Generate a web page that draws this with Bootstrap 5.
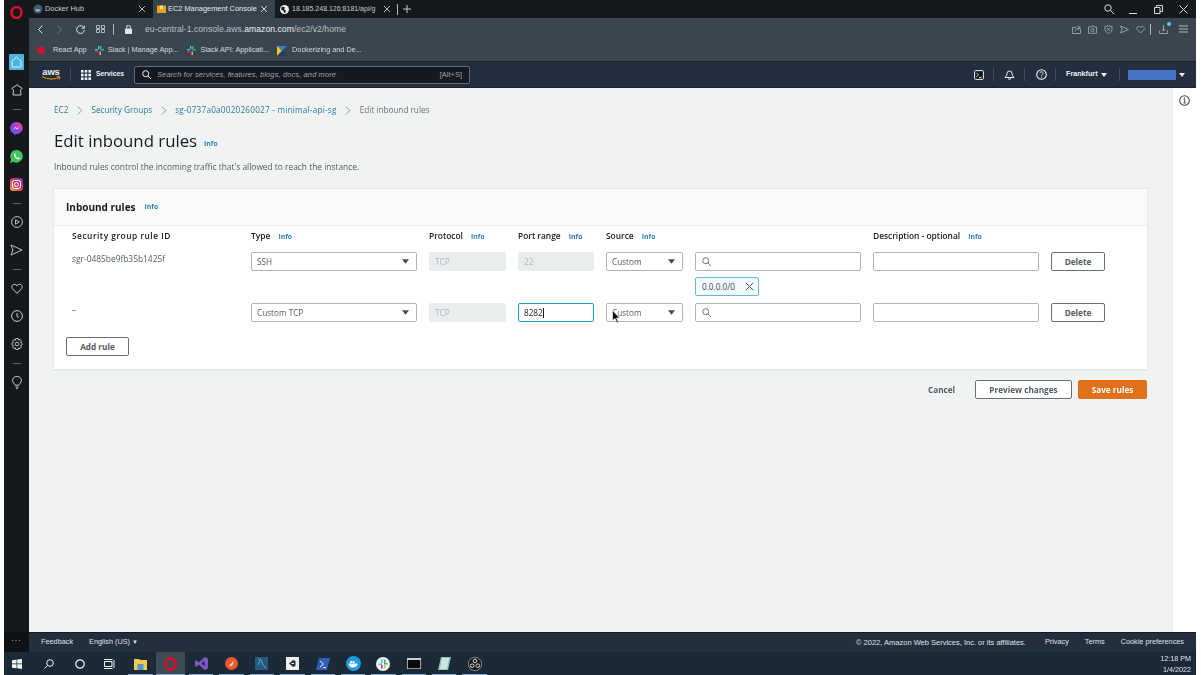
<!DOCTYPE html>
<html lang="en">
<head>
<meta charset="utf-8">
<title>Edit inbound rules</title>
<link href="https://cdn.jsdelivr.net/npm/bootstrap@5.3.0/dist/css/bootstrap.min.css" rel="stylesheet">
<style>
html,body{height:675px;overflow:hidden;background:#fff}
body{font-family:"Liberation Sans",Arial,sans-serif;font-size:8.75px;line-height:1.2;color:#16191f}
.shell{width:1192px;height:675px;margin-left:4px;position:relative;filter:blur(.35px)}
svg{display:block;flex:none}
.tabstrip{height:18px;background:#16191c;color:#c3c9ce;font-size:7.4px}
.logo-slot{width:29px;position:relative;z-index:1;margin-top:7px}
.tabx{width:122px;height:18px;padding:0 7px 0 0}
.tabx.first{width:120px}
.tabx.on{background:#38434d;color:#e6e9eb}
.tabx span{white-space:nowrap}
.tab-gap{gap:2px}
.winctl{margin-left:auto;padding-right:0}
.winctl>div{width:25px;display:flex;justify-content:center}
.midrow{height:634px}
.rail{width:25px;background:#16191c;padding-top:30px}
.rail-i{height:28px}
.rail-d{height:10px}
.rail-d::before{content:"";display:block;width:8px;height:1px;background:#5d656b}
.rail-end{height:20px;margin-top:auto;background:#0f1214;color:#aeb4b8;font-size:9px;letter-spacing:1px;width:100%;line-height:12px}
.mainc{min-width:0}
.addr{height:22px;background:#3a4550;color:#b9c0c6;font-size:8.6px;padding:0 6px 0 9px}
.addr b{font-weight:400;color:#eef0f2}
.addr .vsep{width:1px;height:11px;background:#aeb5ba}
.marks{height:22px;background:#3a4550;color:#d6dade;font-size:7.3px;padding:0 0 0 8px;border-bottom:1px solid #1d2329}
.awsnav{height:26px;background:#232f3e;color:#eef0f2;font-size:7.5px;border-bottom:1px solid #1a232e}
.navsep{width:1px;height:13px;background:#414d5c}
.sbox{width:336px;height:18px;background:#16191f;border:1px solid #5f6b7a;border-radius:2px;color:#98a2ad;font-size:7.5px;padding:0 7px 0 7px;font-style:italic}
.sbox em{font-style:normal;margin-left:auto}
.userbar{width:48px;height:10px;background:#4472c4}
.work{height:544px;background:#f1f3f3;font-family:"Open Sans",sans-serif}
.pagec{padding:0 25px;min-width:0}
.crumbs{height:44px;margin:0;padding:0;font-size:8.2px;flex-wrap:nowrap;color:#687078;white-space:nowrap}
.crumbs a{color:#2a7aa5;text-decoration:none}
.crumbs .cs{margin:0 8.500px}
.crumbs .sgname{letter-spacing:.22px}
.ttl{font-size:16.800px;line-height:18px;font-weight:400;color:#16191f;margin:0;font-family:"Open Sans",sans-serif}
.infol{font-size:6.800px;font-weight:700;color:#2a7fb0;text-decoration:none}
.lede{margin:12px 0 0;color:#545b64;font-size:8.4px;line-height:10px;height:10px}
.rules-card{margin-top:17px;height:180px;border:0;border-radius:0;box-shadow:0 0 0 1px #e4e8e8,0 1px 1px 0 #a9b3b4;background:#fff;overflow:visible}
.rules-head{height:37px;background:#fafafa;border-bottom:1px solid #eaeded;padding:0 12px;border-radius:0}
.rules-head h2{font-size:10px;font-weight:700;margin:0;color:#16191f;font-family:"Open Sans",sans-serif}
.rules-body{padding:5px 12px 0 18px}
.rgrid{display:grid;grid-template-columns:167px 166px 77px 76px 77px 166px 166px 54px;column-gap:12px}
.rh{height:10px;line-height:10px;font-weight:600;font-size:8.4px;color:#16191f;margin-bottom:11px;white-space:nowrap}
.rh .infol{margin-left:6px}
.rh.widetxt{letter-spacing:.5px}
.ctl.form-control,.ctl.form-select{height:19px;min-height:19px;padding:0 5px;font-size:8.2px;line-height:17px;border:1px solid #aab7b8;border-radius:2px;color:#545b64;box-shadow:none;font-family:"Open Sans",sans-serif}
.ctl.form-select{background-size:7px 5px;background-position:right 7px center;padding-right:18px;background-image:url("data:image/svg+xml,%3Csvg xmlns='http://www.w3.org/2000/svg' viewBox='0 0 9 6'%3E%3Cpath d='M0 0h9L4.500 6z' fill='%23444b52'/%3E%3C/svg%3E")}
.ctl.form-control:disabled{background:#eaeded;border-color:#eaeded;color:#aab7b8;opacity:1}
.ctl.focused{border:1.5px solid #12a0c4;color:#16191f;display:flex;align-items:center}
.caret-bar{display:inline-block;width:1px;height:10px;background:#16191f}
.ridtxt{color:#545b64;font-size:8.4px;line-height:10px;margin-top:2px}
.sinput{height:19px;border:1px solid #aab7b8;border-radius:2px;background:#fff;padding:0 6px}
.btn.delbtn{height:19px;padding:0;font-size:8.2px;font-weight:700;line-height:17px;border:1px solid #687078;border-radius:2px;color:#545b64;background:#fff;font-family:"Open Sans",sans-serif}
.chipcell{height:19px;margin:6px 0 7px}
.chip{width:64px;height:19px;background:#f1faff;border:1px solid #66bcd2;border-radius:2px;padding:0 4px 0 6px;color:#444b52;font-size:8.2px}
.btn.addbtn{width:63px;height:19px;padding:0;margin:15px 0 0 -6px;font-size:8.2px;font-weight:700;line-height:17px;border:1px solid #687078;border-radius:2px;color:#545b64;background:#fff;font-family:"Open Sans",sans-serif}
.actions{margin-top:11px;gap:0}
.btn.linkbtn,.btn.prev,.btn.savebtn{height:19px;padding:0;font-size:8.2px;font-weight:700;line-height:17px;border-radius:2px;font-family:"Open Sans",sans-serif}
.btn.linkbtn{color:#545b64;border:0;width:27px;margin-right:20px;white-space:nowrap}
.btn.prev{width:97px;border:1px solid #687078;color:#545b64;background:#fff;margin-right:6px}
.btn.savebtn{width:69px;background:#e0701a;border:1px solid #e0701a;color:#fff}
.sidepanel{width:24px;background:#fff;padding-top:7px;border-left:1px solid #eaeded}
.foot{height:20px;background:#232f3e;color:#dfe3e6;font-size:7.3px;padding:0 12px 0 12px;border-top:1px solid #151c25}
.foot .tri{font-size:6px}
.taskb{height:23px;background:#1c2a38;color:#e6eaed}
.slot{width:30.4px;height:23px;flex:none}
.slot.run{box-shadow:inset 0 -1px 0 #7fb3d6;width:24.4px;margin:0 3px}
.slot.cur{background:#3f4b54;box-shadow:inset 0 -1px 0 #7fb3d6;width:29px;margin:0 .7px}
.clock{margin-left:auto;text-align:right;font-size:7.2px;line-height:11px;padding-right:5px;color:#e4e8ec}
.mpointer{position:absolute;left:608px;top:310px}
.blue-dot{position:absolute;right:-3px;top:-3px;width:4px;height:4px;border-radius:50%;background:#63c2ef}
</style>
</head>
<body>
<div class="shell d-flex flex-column">

  <!-- tab strip -->
  <div class="tabstrip d-flex align-items-center">
    <div class="logo-slot d-flex justify-content-center" style="padding-right:5px">
      <svg width="13" height="13" viewBox="0 0 13 13"><ellipse cx="6.500" cy="6.500" rx="5" ry="5.500" fill="none" stroke="#d70f2b" stroke-width="2.600"/></svg>
    </div>
    <div class="tabx first tab-gap d-flex align-items-center">
      <svg width="10" height="10" viewBox="0 0 10 10"><circle cx="5" cy="5" r="4.500" fill="#3b5a78"/><path d="M2 5.500h5.500q-1 2-3 2T2 5.500z" fill="#9cc"/></svg>
      <span>Docker Hub</span>
      <svg class="ms-auto" width="8" height="8" viewBox="0 0 8 8"><path d="M1 1l6 6M7 1L1 7" stroke="#aeb5ba"/></svg>
    </div>
    <div class="tabx on tab-gap d-flex align-items-center" style="padding-left:4px">
      <svg width="9" height="10" viewBox="0 0 9 10"><path d="M0 1.500h9V9H0z" fill="#e8a317"/><path d="M3 1.500h3V5H3z" fill="#f7d98a"/></svg>
      <span>EC2 Management Console</span>
      <svg class="ms-auto" width="8" height="8" viewBox="0 0 8 8"><path d="M1 1l6 6M7 1L1 7" stroke="#d5d9dc"/></svg>
    </div>
    <div class="tabx d-flex align-items-center" style="padding-left:5px;width:116px;padding-right:0;gap:3px">
      <svg width="9" height="9" viewBox="0 0 9 9"><circle cx="4.500" cy="4.500" r="4.500" fill="#eef0f2"/><path d="M2 1.500l3 1-1 2 2 1-1 3-2-3-2-1z" fill="#16191c"/></svg>
      <span style="font-size:7px">18.185.248.126:8181/api/g</span>
      <svg class="ms-auto" width="8" height="8" viewBox="0 0 8 8"><path d="M1 1l6 6M7 1L1 7" stroke="#aeb5ba"/></svg>
    </div>
    <div style="width:1px;height:11px;background:#aeb5ba;margin-left:6px"></div>
    <svg style="margin-left:5px" width="8" height="8" viewBox="0 0 8 8"><path d="M4 0v8M0 4h8" stroke="#c3c9ce"/></svg>
    <div class="winctl d-flex align-items-center">
      <div><svg width="10" height="10" viewBox="0 0 10 10"><circle cx="4" cy="4" r="3.200" fill="none" stroke="#d5d9dc"/><path d="M6.500 6.500L10 10" stroke="#d5d9dc"/></svg></div>
      <div><svg width="9" height="9" viewBox="0 0 9 9"><path d="M0 8.500h8" stroke="#d5d9dc"/></svg></div>
      <div><svg width="9" height="9" viewBox="0 0 9 9"><path d="M.5 2.500h5.500v6H.5zM2.500 2.500V.5h6v6H6" fill="none" stroke="#d5d9dc"/></svg></div>
      <div><svg width="9" height="9" viewBox="0 0 9 9"><path d="M.5.500l8 8M8.500.5l-8 8" stroke="#d5d9dc"/></svg></div>
    </div>
  </div>

  <div class="midrow d-flex">
    <!-- opera rail -->
    <div class="rail d-flex flex-column align-items-center">
      <div class="rail-i d-flex align-items-center justify-content-center">
        <svg width="15" height="16" viewBox="0 0 15 16"><rect width="15" height="16" rx="1" fill="#4fb3de"/><path d="M3 13V7l4.500-4L12 7v6z" fill="none" stroke="#dff3fb"/></svg>
      </div>
      <div class="rail-i d-flex align-items-center justify-content-center">
        <svg width="12" height="12" viewBox="0 0 12 12"><path d="M2 11l.5-5L.7 4.500 6 .8l5.300 3.700L9.500 6l.5 5z" fill="none" stroke="#c7ccd0"/></svg>
      </div>
      <div class="rail-d d-flex align-items-center"></div>
      <div class="rail-i d-flex align-items-center justify-content-center">
        <svg width="13" height="13" viewBox="0 0 13 13"><defs><linearGradient id="msg" x1="0" y1="1" x2="1" y2="0"><stop offset="0" stop-color="#3a6ff0"/><stop offset=".5" stop-color="#a03be0"/><stop offset="1" stop-color="#f0527a"/></linearGradient></defs><path d="M6.500 0a6.300 6 0 0 1 0 12L4 13v-1.500A6.300 6 0 0 1 6.500 0z" fill="url(#msg)"/><path d="M3 8l2.500-3 2 1.500L10 4 7.500 7.500l-2-1.500z" fill="#fff"/></svg>
      </div>
      <div class="rail-i d-flex align-items-center justify-content-center">
        <svg width="13" height="13" viewBox="0 0 13 13"><path d="M6.500 0a6.300 6.300 0 1 1-3 11.800L0 13l1.200-3.400A6.300 6.300 0 0 1 6.500 0z" fill="#3ec65a"/><path d="M4.200 3.500c-1 1 0 3.200 1.500 4.500s3.300 2 4 1l.2-1-1.500-.8-.7.7c-1-.4-2-1.400-2.400-2.300l.7-.7L5 3.200z" fill="#fff"/></svg>
      </div>
      <div class="rail-i d-flex align-items-center justify-content-center">
        <svg width="13" height="13" viewBox="0 0 13 13"><defs><linearGradient id="ig" x1="0" y1="1" x2="1" y2="0"><stop offset="0" stop-color="#f9b13c"/><stop offset=".5" stop-color="#e1306c"/><stop offset="1" stop-color="#6a3bc0"/></linearGradient></defs><rect width="13" height="13" rx="3" fill="url(#ig)"/><rect x="2.500" y="2.500" width="8" height="8" rx="2" fill="none" stroke="#fff"/><circle cx="6.500" cy="6.500" r="2" fill="none" stroke="#fff"/></svg>
      </div>
      <div class="rail-d d-flex align-items-center"></div>
      <div class="rail-i d-flex align-items-center justify-content-center">
        <svg width="12" height="12" viewBox="0 0 12 12"><circle cx="6" cy="6" r="5.400" fill="none" stroke="#b9bec2"/><path d="M4.500 3.800v4.400L8.300 6z" fill="none" stroke="#b9bec2"/></svg>
      </div>
      <div class="rail-i d-flex align-items-center justify-content-center">
        <svg width="13" height="12" viewBox="0 0 13 12"><path d="M1 1l11 5-11 5 2-5z" fill="none" stroke="#b9bec2"/></svg>
      </div>
      <div class="rail-d d-flex align-items-center"></div>
      <div class="rail-i d-flex align-items-center justify-content-center">
        <svg width="12" height="11" viewBox="0 0 12 11"><path d="M6 10.300L1.300 5.600C-.5 3 2.800-.5 6 2.500 9.200-.5 12.500 3 10.700 5.600z" fill="none" stroke="#c7ccd0"/></svg>
      </div>
      <div class="rail-i d-flex align-items-center justify-content-center">
        <svg width="12" height="12" viewBox="0 0 12 12"><circle cx="6" cy="6" r="5.400" fill="none" stroke="#c7ccd0"/><path d="M6 3v3.300l2 1" fill="none" stroke="#c7ccd0"/></svg>
      </div>
      <div class="rail-i d-flex align-items-center justify-content-center">
        <svg width="12" height="12" viewBox="0 0 12 12"><path d="M4.800.6h2.400l.4 1.600 1.500-.7 1.400 1.800-1 1.300 1.600.7v1.500l-1.600.7 1 1.300-1.400 1.800-1.500-.7-.4 1.600H4.800l-.4-1.600-1.500.7-1.400-1.800 1-1.300L.9 6.800V5.300l1.600-.7-1-1.300 1.400-1.800 1.500.7z" fill="none" stroke="#b9bec2"/><circle cx="6" cy="6" r="1.800" fill="none" stroke="#b9bec2"/></svg>
      </div>
      <div class="rail-d d-flex align-items-center"></div>
      <div class="rail-i d-flex align-items-center justify-content-center">
        <svg width="10" height="13" viewBox="0 0 10 13"><path d="M3.200 9.200C2.800 7.800.6 6.800.6 4.500a4.400 4.200 0 0 1 8.800 0c0 2.300-2.200 3.300-2.600 4.700z" fill="none" stroke="#c7ccd0"/><path d="M3.500 11h3M4.200 12.500h1.600" stroke="#c7ccd0"/></svg>
      </div>
      <div class="rail-end d-flex align-items-start justify-content-center">...</div>
    </div>

    <div class="mainc flex-grow-1 d-flex flex-column">
      <!-- address bar -->
      <div class="addr d-flex align-items-center">
        <svg width="5" height="9" viewBox="0 0 5 9"><path d="M4.500.5L.5 4.500l4 4" fill="none" stroke="#e1e4e7"/></svg>
        <svg style="margin-left:14px" width="5" height="9" viewBox="0 0 5 9"><path d="M.5.500l4 4-4 4" fill="none" stroke="#6c7780"/></svg>
        <svg style="margin-left:14px" width="9" height="9" viewBox="0 0 9 9"><path d="M8 2.800A3.900 3.900 0 1 0 8.400 5M8.300.6v2.600H5.700" fill="none" stroke="#dfe3e6"/></svg>
        <svg style="margin-left:11px" width="9" height="8" viewBox="0 0 9 8"><path d="M.5.500h3v3h-3zM5.500.5h3v3h-3zM.5 4.500h3v3h-3zM5.500 4.500h3v3h-3z" fill="none" stroke="#cfd4d8" stroke-width=".8"/></svg>
        <div class="vsep" style="margin-left:8px"></div>
        <svg style="margin-left:11px" width="7" height="9" viewBox="0 0 7 9"><rect y="3.500" width="7" height="5.500" rx=".6" fill="#e1e4e7"/><path d="M1.700 3.500V2a1.800 1.800 0 0 1 3.600 0v1.500" fill="none" stroke="#e1e4e7"/></svg>
        <span style="margin-left:13px;white-space:nowrap;letter-spacing:.05px">eu-central-1.console.aws.<b>amazon.com</b>/ec2/v2/home</span>
        <div class="ms-auto d-flex align-items-center" style="gap:7px;padding-right:2px">
          <svg width="9" height="9" viewBox="0 0 9 9"><path d="M8.500 4.500v4H.5v-6h4M3 6.500c.5-2 2-3.500 4.500-3.500M5.500 .8l3 2-3 2" fill="none" stroke="#aab2b8" stroke-width=".8"/></svg>
          <svg width="9" height="9" viewBox="0 0 9 9"><path d="M.5 2h2.200l.6-1h2.400l.6 1h2.200v6.300H.5z" fill="none" stroke="#aab2b8" stroke-width=".8"/><circle cx="4.500" cy="5" r="1.500" fill="none" stroke="#aab2b8" stroke-width=".8"/></svg>
          <svg width="9" height="9" viewBox="0 0 9 9"><path d="M1 1.500Q4.500 0 8 1.500V5Q7 7.500 4.500 8.700 2 7.500 1 5z" fill="none" stroke="#aab2b8" stroke-width=".8"/><path d="M3.200 3l2.600 2.600M5.800 3L3.200 5.600" stroke="#aab2b8" stroke-width=".8"/></svg>
          <svg width="9" height="9" viewBox="0 0 9 9"><path d="M.6 1l7.800 3.500L.6 8l1.400-3.500z" fill="none" stroke="#aab2b8" stroke-width=".8"/></svg>
          <svg width="9" height="9" viewBox="0 0 9 9"><path d="M4.500 8L1 4.500C-.2 2.600 2.400.3 4.500 2.300 6.600.3 9.200 2.600 8 4.500z" fill="none" stroke="#aab2b8" stroke-width=".8"/></svg>
          <div class="vsep" style="margin-left:-2px"></div>
          <div class="position-relative" style="margin-left:1px">
            <svg width="9" height="9" viewBox="0 0 9 9"><path d="M4.500 0v6M2.500 4l2 2 2-2M.5 5.500v3h8v-3" fill="none" stroke="#aab2b8" stroke-width=".8"/></svg>
            <div class="blue-dot"></div>
          </div>
          <svg style="margin-left:4px" width="9" height="8" viewBox="0 0 9 8"><path d="M0 1h9M0 4h9M0 7h9" stroke="#cfd4d8" stroke-width=".8"/></svg>
        </div>
      </div>
      <!-- bookmarks -->
      <div class="marks d-flex align-items-center">
        <svg width="8" height="9" viewBox="0 0 8 9"><circle cx="4" cy="4.500" r="4" fill="#c3182f"/></svg>
        <span style="margin-left:8px;margin-right:8px">React App</span>
        <svg width="9" height="9" viewBox="0 0 9 9"><path d="M3 0h1.500v3H3z" fill="#36c5f0"/><path d="M0 3h3v1.500H0z" fill="#36c5f0"/><path d="M5.500 3h3.500v1.500H5.500z" fill="#2eb67d"/><path d="M4.500 5.500H6V9H4.500z" fill="#ecb22e"/><path d="M0 5h3.500v1.500H0z" fill="#e01e5a"/><path d="M5 0h1.500v3H5z" fill="#2eb67d"/></svg>
        <span style="margin-left:4px;margin-right:8px">Slack | Manage App...</span>
        <svg width="9" height="9" viewBox="0 0 9 9"><path d="M3 0h1.500v3H3z" fill="#36c5f0"/><path d="M0 3h3v1.500H0z" fill="#36c5f0"/><path d="M5.500 3h3.500v1.500H5.500z" fill="#2eb67d"/><path d="M4.500 5.500H6V9H4.500z" fill="#ecb22e"/><path d="M0 5h3.500v1.500H0z" fill="#e01e5a"/><path d="M5 0h1.500v3H5z" fill="#2eb67d"/></svg>
        <span style="margin-left:5px;margin-right:8px">Slack API: Applicati...</span>
        <svg width="10" height="10" viewBox="0 0 10 10"><path d="M0 0h10L5 5z" fill="#2f7fd6"/><path d="M0 0v10l5-5z" fill="#f5c518"/><path d="M0 10h10L5 5z" fill="#1c3f78"/></svg>
        <span style="margin-left:5px">Dockerizing and De...</span>
      </div>
      <!-- AWS nav -->
      <div class="awsnav d-flex align-items-center navbar p-0 flex-nowrap justify-content-start" style="padding-left:12px!important">
        <div class="d-flex flex-column align-items-center" style="width:20px;margin-top:-2px">
          <span style="font-size:9.5px;line-height:8px;font-weight:700;letter-spacing:-.2px">aws</span>
          <svg width="20" height="4" viewBox="0 0 20 4"><path d="M1 .5Q10 5 18 1.500M16 .5l3 .5-1 2.500" fill="none" stroke="#f90"/></svg>
        </div>
        <div class="navsep" style="margin-left:9px"></div>
        <svg style="margin-left:10px" width="10" height="10" viewBox="0 0 10 10" fill="#eef0f2"><rect width="2.600" height="2.600"/><rect x="3.700" width="2.600" height="2.600"/><rect x="7.400" width="2.600" height="2.600"/><rect y="3.700" width="2.600" height="2.600"/><rect x="3.700" y="3.700" width="2.600" height="2.600"/><rect x="7.400" y="3.700" width="2.600" height="2.600"/><rect y="7.400" width="2.600" height="2.600"/><rect x="3.700" y="7.400" width="2.600" height="2.600"/><rect x="7.400" y="7.400" width="2.600" height="2.600"/></svg>
        <span style="margin-left:5px;font-weight:700;font-size:6.8px;width:38px">Services</span>
        <div class="sbox d-flex align-items-center">
          <svg width="9" height="9" viewBox="0 0 9 9"><circle cx="3.700" cy="3.700" r="3" fill="none" stroke="#eef0f2"/><path d="M6 6l3 3" stroke="#eef0f2"/></svg>
          <span style="margin-left:6px;letter-spacing:.11px">Search for services, features, blogs, docs, and more</span>
          <em>[Alt+S]</em>
        </div>
        <svg style="margin-left:504px" width="10" height="10" viewBox="0 0 10 10"><rect x=".6" y=".6" width="8.800" height="8.800" rx="1" fill="#16191f" stroke="#eef0f2"/><path d="M2.500 2.800l2 2-2 2M5 7.500h2.500" fill="none" stroke="#eef0f2" stroke-width=".9"/></svg>
        <div class="navsep" style="margin-left:9px"></div>
        <svg style="margin-left:10px" width="11" height="11" viewBox="0 0 11 11"><path d="M1 8.500Q3 7 3 4.500a2.500 2.500 0 0 1 5 0Q8 7 10 8.500z" fill="none" stroke="#eef0f2"/><circle cx="5.500" cy="9.700" r="1" fill="none" stroke="#eef0f2" stroke-width=".8"/></svg>
        <div class="navsep" style="margin-left:9px"></div>
        <svg style="margin-left:11px" width="11" height="11" viewBox="0 0 11 11"><circle cx="5.500" cy="5.500" r="4.800" fill="none" stroke="#eef0f2" stroke-width="1.100"/><path d="M3.900 4.200a1.600 1.500 0 1 1 2.400 1.400c-.6.400-.8.700-.8 1.200" fill="none" stroke="#eef0f2"/><circle cx="5.500" cy="8.200" r=".6" fill="#eef0f2"/></svg>
        <div class="navsep" style="margin-left:8px"></div>
        <span style="margin-left:10px;font-weight:700;font-size:7.2px;white-space:nowrap">Frankfurt</span>
        <svg style="margin-left:3px" width="6" height="4" viewBox="0 0 6 4"><path d="M0 0h6L3 4z" fill="#eef0f2"/></svg>
        <div class="navsep" style="margin-left:12px"></div>
        <div class="userbar" style="margin-left:8px"></div>
        <svg style="margin-left:3px" width="6" height="4" viewBox="0 0 6 4"><path d="M0 0h6L3 4z" fill="#eef0f2"/></svg>
      </div>
      <!-- workspace -->
      <div class="work d-flex">
        <div class="pagec flex-grow-1">
          <nav class="d-flex">
            <ol class="crumbs breadcrumb align-items-center">
              <li><a href="#">EC2</a></li>
              <li class="cs"><svg width="6" height="9" viewBox="0 0 6 9"><path d="M.8.500l4 4-4 4" fill="none" stroke="#8d969e"/></svg></li>
              <li><a href="#">Security Groups</a></li>
              <li class="cs"><svg width="6" height="9" viewBox="0 0 6 9"><path d="M.8.500l4 4-4 4" fill="none" stroke="#8d969e"/></svg></li>
              <li><a class="sgname" href="#">sg-0737a0a0020260027 - minimal-api-sg</a></li>
              <li class="cs"><svg width="6" height="9" viewBox="0 0 6 9"><path d="M.8.500l4 4-4 4" fill="none" stroke="#8d969e"/></svg></li>
              <li>Edit inbound rules</li>
            </ol>
          </nav>
          <div class="d-flex align-items-end">
            <h1 class="ttl">Edit inbound rules</h1>
            <a class="infol" href="#" style="margin-left:7px;line-height:12px">Info</a>
          </div>
          <p class="lede">Inbound rules control the incoming traffic that's allowed to reach the instance.</p>

          <div class="card rules-card">
            <div class="card-header rules-head d-flex align-items-center">
              <h2>Inbound rules</h2>
              <a class="infol" href="#" style="margin-left:9px">Info</a>
            </div>
            <div class="card-body rules-body">
              <div class="rgrid">
                <div class="rh widetxt">Security group rule ID</div>
                <div class="rh">Type <a class="infol" href="#">Info</a></div>
                <div class="rh">Protocol <a class="infol" href="#">Info</a></div>
                <div class="rh">Port range <a class="infol" href="#">Info</a></div>
                <div class="rh">Source <a class="infol" href="#">Info</a></div>
                <div class="rh"></div>
                <div class="rh">Description - optional <a class="infol" href="#">Info</a></div>
                <div class="rh"></div>

                <div class="ridtxt">sgr-0485be9fb35b1425f</div>
                <select class="form-select ctl"><option>SSH</option></select>
                <input class="form-control ctl" value="TCP" disabled>
                <input class="form-control ctl" value="22" disabled>
                <select class="form-select ctl"><option>Custom</option></select>
                <div class="sinput d-flex align-items-center"><svg width="9" height="9" viewBox="0 0 9 9"><circle cx="3.700" cy="3.700" r="3" fill="none" stroke="#687078"/><path d="M6 6l3 3" stroke="#687078"/></svg></div>
                <input class="form-control ctl" value="">
                <button class="btn delbtn" type="button">Delete</button>

                <div class="chipcell" style="grid-column:6">
                  <div class="chip d-flex align-items-center justify-content-between">
                    <span>0.0.0.0/0</span>
                    <svg width="9" height="9" viewBox="0 0 9 9"><path d="M.8.800l7.400 7.400M8.200.8L.8 8.200" stroke="#545b64"/></svg>
                  </div>
                </div>

                <div class="ridtxt" style="grid-column:1">–</div>
                <select class="form-select ctl"><option>Custom TCP</option></select>
                <input class="form-control ctl" value="TCP" disabled>
                <div class="form-control ctl focused"><span>8282</span><span class="caret-bar"></span></div>
                <select class="form-select ctl"><option>Custom</option></select>
                <div class="sinput d-flex align-items-center"><svg width="9" height="9" viewBox="0 0 9 9"><circle cx="3.700" cy="3.700" r="3" fill="none" stroke="#687078"/><path d="M6 6l3 3" stroke="#687078"/></svg></div>
                <input class="form-control ctl" value="">
                <button class="btn delbtn" type="button">Delete</button>
              </div>
              <button class="btn addbtn" type="button">Add rule</button>
            </div>
          </div>

          <div class="actions d-flex align-items-center justify-content-end">
            <button class="btn linkbtn" type="button">Cancel</button>
            <button class="btn prev" type="button">Preview changes</button>
            <button class="btn savebtn" type="button">Save rules</button>
          </div>
        </div>
        <div class="sidepanel d-flex justify-content-center">
          <svg width="11" height="11" viewBox="0 0 11 11"><circle cx="5.500" cy="5.500" r="4.800" fill="none" stroke="#444b52" stroke-width="1.100"/><path d="M4.500 4.800h1.200v3M4.300 8h2.500" fill="none" stroke="#444b52"/><circle cx="5.500" cy="3.200" r=".8" fill="#444b52"/></svg>
        </div>
      </div>
      <!-- console footer -->
      <div class="foot d-flex align-items-center">
        <span>Feedback</span>
        <span style="margin-left:16px">English (US) <span class="tri">▼</span></span>
        <span class="ms-auto" style="font-size:7.5px">© 2022, Amazon Web Services, Inc. or its affiliates.</span>
        <span style="margin-left:19px">Privacy</span>
        <span style="margin-left:16px">Terms</span>
        <span style="margin-left:16px">Cookie preferences</span>
      </div>
    </div>
  </div>

  <!-- windows taskbar -->
  <div class="taskb d-flex align-items-center">
    <div class="slot d-flex align-items-center justify-content-center" style="width:26px">
      <svg width="10" height="10" viewBox="0 0 10 10" fill="#f2f4f6"><path d="M0 1.300L4.500.6v4H0zM5.200.5L10 0v4.600H5.200zM0 5.300h4.500v4L0 8.700zM5.200 5.300H10V10l-4.800-.7z"/></svg>
    </div>
    <div class="slot d-flex align-items-center justify-content-center" style="margin-left:4px">
      <svg width="10" height="10" viewBox="0 0 10 10"><circle cx="6" cy="4" r="3.300" fill="none" stroke="#eef0f2"/><path d="M3.600 6.400L.5 9.500" stroke="#eef0f2"/></svg>
    </div>
    <div class="slot d-flex align-items-center justify-content-center">
      <svg width="10" height="10" viewBox="0 0 10 10"><circle cx="5" cy="5" r="4.200" fill="none" stroke="#eef0f2" stroke-width="1.200"/></svg>
    </div>
    <div class="slot d-flex align-items-center justify-content-center">
      <svg width="11" height="10" viewBox="0 0 11 10"><path d="M.5 2.500h7.500v5H.5zM0 .5h8.500M0 9.500h8.500M10 1v8" fill="none" stroke="#eef0f2"/></svg>
    </div>
    <div class="slot run d-flex align-items-center justify-content-center" style="margin-left:3px">
      <svg width="13" height="12" viewBox="0 0 13 12"><path d="M0 1h5l1 1h7v10H0z" fill="#f3c94f"/><rect x="3.500" y="6" width="6" height="6" fill="#4a9ad0"/></svg>
    </div>
    <div class="slot cur d-flex align-items-center justify-content-center">
      <svg width="13" height="14" viewBox="0 0 13 14"><ellipse cx="6.500" cy="7" rx="5" ry="5.800" fill="none" stroke="#d70f2b" stroke-width="2.600"/></svg>
    </div>
    <div class="slot run d-flex align-items-center justify-content-center">
      <svg width="13" height="13" viewBox="0 0 13 13"><path d="M9.500 0L13 1.500v10L9.500 13 3.800 7.700 1.200 9.700 0 9V4l1.200-.7 2.600 2zM9.500 4L6.500 6.500l3 2.500z" fill="#7d57c2"/></svg>
    </div>
    <div class="slot run d-flex align-items-center justify-content-center">
      <svg width="13" height="13" viewBox="0 0 13 13"><circle cx="6.500" cy="6.500" r="6.500" fill="#e8592d"/><path d="M3.500 9.500L9 3.500 7.500 8.300z" fill="#f7e3da"/></svg>
    </div>
    <div class="slot run d-flex align-items-center justify-content-center">
      <svg width="13" height="13" viewBox="0 0 13 13"><rect width="13" height="13" fill="#245a7e"/><path d="M3 2l3 1 2 5 3 3M5 4L3 8" fill="none" stroke="#7fb0cf" stroke-width=".8"/></svg>
    </div>
    <div class="slot run d-flex align-items-center justify-content-center">
      <svg width="13" height="13" viewBox="0 0 13 13"><rect width="13" height="13" fill="#f0f0f0"/><path d="M7 3L3 6.500 7 10l2.500-1V4z" fill="#333"/><path d="M5.500 6.500h2.500" stroke="#f0f0f0"/></svg>
    </div>
    <div class="slot run d-flex align-items-center justify-content-center">
      <svg width="14" height="12" viewBox="0 0 14 12"><path d="M3 0h11l-3 12H0z" fill="#2f5fb8"/><path d="M4 3l3.500 3L4 9M7 9.500h3" fill="none" stroke="#f2f4f6"/></svg>
    </div>
    <div class="slot run d-flex align-items-center justify-content-center">
      <svg width="15" height="15" viewBox="0 0 15 15"><circle cx="7.500" cy="7.500" r="7.500" fill="#1d9de0"/><path d="M2.500 7.500h9q0 4-5 4-3.500 0-4-4z" fill="#fff"/><path d="M4 5h2v2H4zM6.500 5h2v2h-2z" fill="#fff"/></svg>
    </div>
    <div class="slot run d-flex align-items-center justify-content-center">
      <svg width="14" height="14" viewBox="0 0 14 14"><circle cx="7" cy="7" r="7" fill="#f4f4f4"/><path d="M5 2.500h1.500v3.500H5z" fill="#36c5f0"/><path d="M8 2.500h1.500v3.500H8z" fill="#2eb67d"/><path d="M8 8h1.500v3.500H8z" fill="#ecb22e"/><path d="M5 8h1.500v3.500H5z" fill="#e01e5a"/><path d="M2.500 6.500H6V8H2.500z" fill="#36c5f0"/><path d="M8 6h3.500v1.500H8z" fill="#2eb67d"/></svg>
    </div>
    <div class="slot run d-flex align-items-center justify-content-center">
      <svg width="14" height="11" viewBox="0 0 14 11"><rect width="14" height="11" fill="#c8ccd0"/><rect x=".8" y="2" width="12.400" height="8.300" fill="#0b0b0b"/></svg>
    </div>
    <div class="slot run d-flex align-items-center justify-content-center">
      <svg width="13" height="13" viewBox="0 0 13 13"><path d="M3 0h10l-3 13H0z" fill="#8ec3b8"/><path d="M4 1h7L9 12H2z" fill="#cfe3df"/></svg>
    </div>
    <div class="slot run d-flex align-items-center justify-content-center">
      <svg width="14" height="14" viewBox="0 0 14 14"><circle cx="7" cy="7" r="6.700" fill="#1a1a1a" stroke="#c8ccd0" stroke-width=".6"/><circle cx="7" cy="4" r="1.800" fill="none" stroke="#d8dbdd"/><circle cx="4.200" cy="8.700" r="1.800" fill="none" stroke="#d8dbdd"/><circle cx="9.800" cy="8.700" r="1.800" fill="none" stroke="#d8dbdd"/></svg>
    </div>
    <div class="clock"><div>12:18 PM</div><div>1/4/2022</div></div>
  </div>

  <svg class="mpointer" width="9" height="14" viewBox="0 0 9 14"><path d="M.5.500v10l2.500-2 2 4.500 1.500-.7-2-4.300h3.200z" fill="#111" stroke="#eee" stroke-width=".7"/></svg>
</div>
<script src="https://cdn.jsdelivr.net/npm/bootstrap@5.3.0/dist/js/bootstrap.bundle.min.js"></script>
</body>
</html>
